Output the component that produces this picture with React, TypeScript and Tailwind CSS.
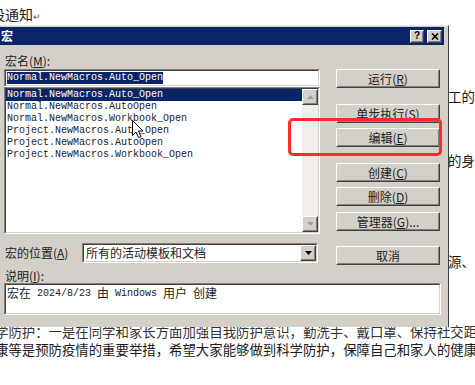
import React from "react";

const CJK = "font-['Noto_Sans_CJK_SC',sans-serif]";
const MONO = "font-['Liberation_Mono',monospace]";

function Raised({ className = "", children }: { className?: string; children?: React.ReactNode }) {
  return (
    <div className={`border border-t-white border-l-white border-b-[#404040] border-r-[#404040] ${className}`}>
      <div className="w-full h-full border border-t-[#d4d0c8] border-l-[#d4d0c8] border-b-[#808080] border-r-[#808080] bg-[#d4d0c8] flex items-center justify-center">
        {children}
      </div>
    </div>
  );
}

function Sunken({ className = "", inner = "", children }: { className?: string; inner?: string; children?: React.ReactNode }) {
  return (
    <div className={`border border-t-[#808080] border-l-[#808080] border-b-white border-r-white ${className}`}>
      <div className={`w-full h-full border border-t-[#404040] border-l-[#404040] border-b-[#d4d0c8] border-r-[#d4d0c8] bg-white ${inner}`}>
        {children}
      </div>
    </div>
  );
}

function Btn({ label, acc, tail = "", className = "" }: { label: string; acc?: string; tail?: string; className?: string }) {
  return (
    <Raised className={`h-[19px] w-[104px] ${className}`}>
      <span className={`${CJK} text-[12px] leading-none text-[#222]`}>
        {label}
        {acc ? (
          <>
            (<span className="underline">{acc}</span>)
          </>
        ) : null}
        {tail}
      </span>
    </Raised>
  );
}

const items = [
  "Normal.NewMacros.Auto_Open",
  "Normal.NewMacros.AutoOpen",
  "Normal.NewMacros.Workbook_Open",
  "Project.NewMacros.Auto_Open",
  "Project.NewMacros.AutoOpen",
  "Project.NewMacros.Workbook_Open",
];

export default function App() {
  return (
    <div className={`relative w-[475px] h-[385px] overflow-hidden bg-white ${CJK} text-[#1a1a1a]`}>
      {/* document behind the dialog */}
      <div className="flex flex-col whitespace-nowrap">
        <div className="h-[28px] leading-[28px] text-[14px] -ml-[9px]">
          设通知<span className="text-[9px] text-[#555]">↵</span>
        </div>
        <div className="mt-[58px] h-[20px] leading-[20px] text-[13.4px] pl-[448px]">工的</div>
        <div className="mt-[44px] h-[20px] leading-[20px] text-[13.4px] pl-[448px]">的身</div>
        <div className="mt-[81px] h-[20px] leading-[20px] text-[13.4px] pl-[448px]">源、</div>
        <div className="mt-[52px] h-[17px] leading-[17px] text-[13.4px] -ml-[5px] text-[#333]">
          学防护：一是在同学和家长方面加强自我防护意识，勤洗手、戴口罩、保持社交距离
        </div>
        <div className="mt-[1px] h-[17px] leading-[17px] text-[13.4px] -ml-[5px]">
          康等是预防疫情的重要举措，希望大家能够做到科学防护，保障自己和家人的健康
        </div>
      </div>

      {/* dialog window */}
      <div className="absolute left-0 top-[25px] w-[449px] h-[302px] bg-[#d4d0c8] border-r border-r-[#404040] border-t border-t-[#ecebe8] pt-[1px] pr-[4px] flex flex-col">
        {/* title bar */}
        <div className="h-[18px] bg-[#0a246a] flex items-center pl-[1px] pr-[2px]">
          <span className="text-white font-bold text-[12px] leading-none">宏</span>
          <div className="ml-auto flex gap-[3px]">
            <Raised className="w-[14px] h-[13px]">
              <span className="font-['Liberation_Sans',sans-serif] text-[10px] font-bold leading-none text-black">?</span>
            </Raised>
            <Raised className="w-[15px] h-[13px]">
              <svg width="8" height="7" viewBox="0 0 8 7">
                <path d="M1 0.5 L7 6.5 M7 0.5 L1 6.5" stroke="#000" strokeWidth="1.6" />
              </svg>
            </Raised>
          </div>
        </div>

        {/* top section */}
        <div className="flex pl-[4px]">
          <div className="w-[316px] flex flex-col">
            <div className="h-[24px] pt-[9px] pl-[1px] text-[12px] leading-[14px] text-[#222]">
              宏名(<span className="underline">M</span>):
            </div>
            <Sunken className="h-[18px]" inner="flex items-center pl-[1px]">
              <span className={`${MONO} text-[10px] leading-[12px] bg-[#0a246a] text-white`}>
                Normal.NewMacros.Auto_Open
              </span>
            </Sunken>
            <Sunken className="h-[147px]" inner="flex">
              <div className="flex-1 flex flex-col">
                {items.map((t, i) => (
                  <div
                    key={t}
                    className={`${MONO} h-[12px] leading-[12px] text-[10px] pl-[1px] ${
                      i === 0 ? "bg-[#0a246a] text-white" : "text-[#222]"
                    }`}
                  >
                    {t}
                  </div>
                ))}
              </div>
              <div className="w-[16px] flex flex-col bg-[#efeeeb]">
                <Raised className="w-[16px] h-[16px]">
                  <svg width="7" height="4" viewBox="0 0 7 4">
                    <path d="M0 4 L3.5 0 L7 4 Z" fill="#a0a0a0" />
                  </svg>
                </Raised>
                <div className="flex-1" />
                <Raised className="w-[16px] h-[16px]">
                  <svg width="7" height="4" viewBox="0 0 7 4">
                    <path d="M0 0 L3.5 4 L7 0 Z" fill="#a0a0a0" />
                  </svg>
                </Raised>
              </div>
            </Sunken>
            <div className="mt-[9px] h-[20px] flex items-center">
              <div className="w-[78px] pl-[1px] text-[12px] leading-[14px] text-[#222]">
                宏的位置(<span className="underline">A</span>)
              </div>
              <Sunken className="w-[236px] h-[20px]" inner="flex items-center">
                <span className="flex-1 pl-[2px] text-[12px] leading-[14px] text-[#222]">所有的活动模板和文档</span>
                <Raised className="w-[16px] h-[16px]">
                  <svg width="7" height="4" viewBox="0 0 7 4">
                    <path d="M0 0 L3.5 4 L7 0 Z" fill="#000" />
                  </svg>
                </Raised>
              </Sunken>
            </div>
          </div>

          <div className="ml-[16px] w-[104px] flex flex-col pt-[24px]">
            <Btn label="运行" acc="R" />
            <Btn label="单步执行" acc="S" className="mt-[16px]" />
            <Btn label="编辑" acc="E" className="mt-[5px]" />
            <Btn label="创建" acc="C" className="mt-[16px]" />
            <Btn label="删除" acc="D" className="mt-[5px]" />
            <Btn label="管理器" acc="G" tail="..." className="mt-[6px]" />
            <Btn label="取消" className="mt-[15px]" />
          </div>
        </div>

        {/* description */}
        <div className="h-[18px] pt-[4px] pl-[5px] text-[12px] leading-[14px] text-[#222]">
          说明(<span className="underline">I</span>):
        </div>
        <div className="pl-[4px]">
          <Sunken className="w-[437px] h-[32px]" inner="pl-[1px] pt-[1px]">
            <div className="flex items-center h-[14px] text-[#222] whitespace-pre">
              <span className="text-[12px] leading-[14px]">宏在</span>
              <span className={`${MONO} text-[10px]`}> 2024/8/23 </span>
              <span className="text-[12px] leading-[14px]">由</span>
              <span className={`${MONO} text-[10px]`}> Windows </span>
              <span className="text-[12px] leading-[14px]">用户</span>
              <span className={`${MONO} text-[10px]`}> </span>
              <span className="text-[12px] leading-[14px]">创建</span>
            </div>
          </Sunken>
        </div>
      </div>

      {/* red highlight annotation */}
      <div className="absolute left-[288px] top-[118px] w-[154px] h-[38px] border-[3px] border-[#ff2a2a] rounded-[5px]" />

      {/* mouse cursor */}
      <svg className="absolute left-[132px] top-[120px]" width="12" height="19" viewBox="0 0 12 19">
        <path d="M0.5 0.5 L0.5 15.5 L4 12 L6.5 17.5 L9 16.5 L6.5 11 L11 11 Z" fill="#fff" stroke="#000" strokeWidth="1" />
      </svg>
    </div>
  );
}
